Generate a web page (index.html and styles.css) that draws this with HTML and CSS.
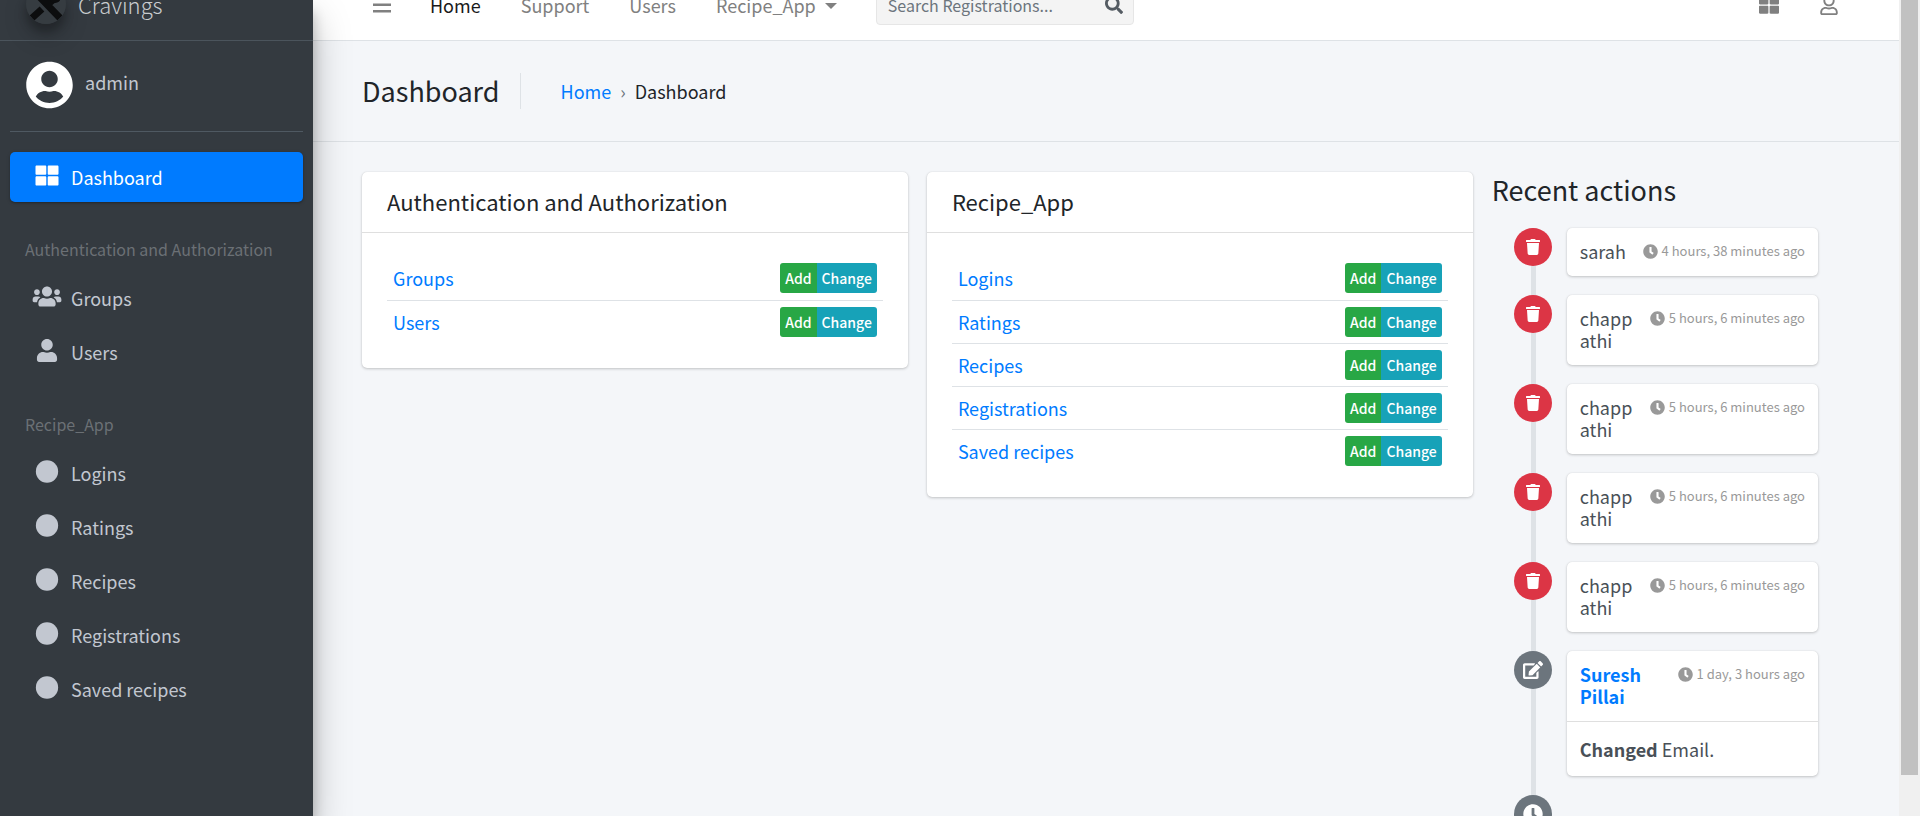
FILE: index.html
```html
<!DOCTYPE html>
<html lang="en">
<head>
<meta charset="utf-8">
<title>Dashboard | Cravings</title>
<link rel="stylesheet" href="styles.css">
</head>
<body>
<svg class="sprite" aria-hidden="true">
  <symbol id="i-grid" viewBox="0 0 512 512"><path d="M296 32h192c13.300 0 24 10.700 24 24v160c0 13.300-10.700 24-24 24H296c-13.300 0-24-10.700-24-24V56c0-13.300 10.700-24 24-24zm-80 0H24C10.700 32 0 42.700 0 56v160c0 13.300 10.700 24 24 24h192c13.300 0 24-10.700 24-24V56c0-13.300-10.700-24-24-24zM0 296v160c0 13.300 10.700 24 24 24h192c13.300 0 24-10.700 24-24V296c0-13.300-10.700-24-24-24H24c-13.300 0-24 10.700-24 24zm296 184h192c13.300 0 24-10.700 24-24V296c0-13.300-10.700-24-24-24H296c-13.300 0-24 10.700-24 24v160c0 13.300 10.700 24 24 24z"/></symbol>
  <symbol id="i-account" viewBox="0 0 496 512"><path d="M248 8C111 8 0 119 0 256s111 248 248 248 248-111 248-248S385 8 248 8zm0 96c48.600 0 88 39.400 88 88s-39.400 88-88 88-88-39.400-88-88 39.400-88 88-88zm0 344c-58.700 0-111.300-26.600-146.500-68.200 18.800-35.400 55.600-59.800 98.500-59.800 2.400 0 4.800.4 7.100 1.100 13 4.200 26.600 6.900 40.900 6.900 14.300 0 28-2.700 40.900-6.900 2.300-.7 4.700-1.100 7.100-1.100 42.900 0 79.700 24.400 98.500 59.800C359.300 421.400 306.700 448 248 448z"/></symbol>
  <symbol id="i-users" viewBox="0 0 640 512"><path d="M96 224c35.300 0 64-28.700 64-64s-28.700-64-64-64-64 28.700-64 64 28.700 64 64 64zm448 0c35.300 0 64-28.700 64-64s-28.700-64-64-64-64 28.700-64 64 28.700 64 64 64zm32 32h-64c-17.600 0-33.500 7.100-45.100 18.600 40.300 22.100 68.900 62 75.100 109.400h66c17.700 0 32-14.300 32-32v-32c0-35.300-28.700-64-64-64zm-256 0c61.900 0 112-50.100 112-112S381.900 32 320 32 208 82.100 208 144s50.100 112 112 112zm76.800 32h-8.300c-20.800 10-43.900 16-68.500 16s-47.600-6-68.500-16h-8.300C179.600 288 128 339.600 128 403.200V432c0 26.500 21.500 48 48 48h288c26.500 0 48-21.500 48-48v-28.800c0-63.600-51.600-115.200-115.200-115.200zm-223.700-13.400C161.500 263.100 145.600 256 128 256H64c-35.300 0-64 28.700-64 64v32c0 17.700 14.300 32 32 32h65.900c6.300-47.400 34.900-87.300 75.200-109.400z"/></symbol>
  <symbol id="i-user" viewBox="0 0 448 512"><path d="M224 256c70.700 0 128-57.300 128-128S294.700 0 224 0 96 57.300 96 128s57.300 128 128 128zm89.600 32h-16.700c-22.200 10.200-46.900 16-72.900 16s-50.600-5.800-72.900-16h-16.700C60.200 288 0 348.200 0 422.400V464c0 26.500 21.500 48 48 48h352c26.500 0 48-21.500 48-48v-41.600c0-74.200-60.200-134.400-134.400-134.400z"/></symbol>
  <symbol id="i-user-line" viewBox="0 0 448 512"><path d="M313.600 304c-28.700 0-42.500 16-89.600 16-47.100 0-60.800-16-89.600-16C60.200 304 0 364.200 0 438.400V464c0 26.500 21.500 48 48 48h352c26.500 0 48-21.500 48-48v-25.600c0-74.200-60.200-134.400-134.400-134.400zM400 464H48v-25.600c0-47.600 38.800-86.400 86.400-86.400 14.600 0 38.300 16 89.600 16 51.700 0 74.900-16 89.600-16 47.600 0 86.400 38.800 86.400 86.400V464zM224 288c79.500 0 144-64.500 144-144S303.500 0 224 0 80 64.500 80 144s64.500 144 144 144zm0-240c52.900 0 96 43.100 96 96s-43.100 96-96 96-96-43.100-96-96 43.100-96 96-96z"/></symbol>
  <symbol id="i-dot" viewBox="0 0 512 512"><circle cx="256" cy="256" r="248"/></symbol>
  <symbol id="i-clock" viewBox="0 0 512 512"><path d="M256 8C119 8 8 119 8 256s111 248 248 248 248-111 248-248S393 8 256 8zm57.100 350.100L224.900 294c-3.100-2.300-4.900-5.900-4.900-9.700V116c0-6.600 5.400-12 12-12h48c6.600 0 12 5.400 12 12v137.700l63.500 46.200c5.400 3.900 6.500 11.400 2.600 16.800l-28.200 38.800c-3.900 5.300-11.400 6.500-16.800 2.600z"/></symbol>
  <symbol id="i-trash" viewBox="0 0 448 512"><path d="M432 32H312l-9.400-18.700A24 24 0 0 0 281.100 0H166.800a23.700 23.700 0 0 0-21.400 13.300L136 32H16A16 16 0 0 0 0 48v32a16 16 0 0 0 16 16h416a16 16 0 0 0 16-16V48a16 16 0 0 0-16-16zM53.200 467a48 48 0 0 0 47.900 45h245.800a48 48 0 0 0 47.900-45L416 128H32z"/></symbol>
  <symbol id="i-edit" viewBox="0 0 576 512"><path d="M402.600 83.200l90.200 90.200c3.800 3.800 3.800 10 0 13.800L274.400 405.600l-92.800 10.300c-12.400 1.400-22.900-9.100-21.500-21.500l10.300-92.800L388.800 83.200c3.800-3.800 10-3.800 13.800 0zm162-22.900l-48.800-48.800c-15.200-15.200-39.900-15.200-55.200 0l-35.400 35.400c-3.800 3.800-3.800 10 0 13.800l90.200 90.200c3.800 3.800 10 3.800 13.800 0l35.400-35.400c15.200-15.300 15.200-40 0-55.200zM384 346.200V448H64V128h229.800c3.200 0 6.200-1.300 8.500-3.500l40-40c7.600-7.600 2.200-20.500-8.500-20.500H48C21.500 64 0 85.500 0 112v352c0 26.500 21.500 48 48 48h352c26.500 0 48-21.500 48-48V306.200c0-10.700-12.900-16-20.500-8.500l-40 40c-2.200 2.300-3.500 5.300-3.500 8.500z"/></symbol>
  <symbol id="i-search" viewBox="0 0 512 512"><path d="M505 442.700L405.300 343c-4.500-4.500-10.600-7-17-7H372c27.600-35.300 44-79.700 44-128C416 93.100 322.900 0 208 0S0 93.100 0 208s93.100 208 208 208c48.300 0 92.700-16.400 128-44v16.300c0 6.400 2.500 12.500 7 17l99.700 99.700c9.400 9.400 24.600 9.400 33.900 0l28.300-28.300c9.400-9.400 9.400-24.600.1-34zM208 336c-70.700 0-128-57.200-128-128 0-70.700 57.200-128 128-128 70.700 0 128 57.200 128 128 0 70.700-57.200 128-128 128z"/></symbol>
</svg>
<div class="app">
  <aside class="sidebar">
    <a class="brand" href="#">
      <svg class="brand-logo" viewBox="0 0 40 40" aria-hidden="true"><circle cx="20" cy="20" r="20" fill="#363c41"/><path d="M4 3l30 31M6 34l10-9M22 20l6-5" stroke="#0c0d0e" stroke-width="7" fill="none"/><circle cx="29" cy="13" r="6" fill="#0c0d0e"/></svg>
      <span>Cravings</span>
    </a>
    <div class="side-body">
      <div class="user-panel">
        <svg class="avatar" aria-hidden="true"><use href="#i-account"/></svg>
        <a href="#">admin</a>
      </div>
      <nav class="side-nav" aria-label="Models">
        <a class="side-link active" href="#"><svg class="ico"><use href="#i-grid"/></svg>Dashboard</a>
        <h2 class="side-head">Authentication and Authorization</h2>
        <a class="side-link" href="#"><svg class="ico"><use href="#i-users"/></svg>Groups</a>
        <a class="side-link" href="#"><svg class="ico"><use href="#i-user"/></svg>Users</a>
        <h2 class="side-head">Recipe_App</h2>
        <a class="side-link" href="#"><svg class="ico"><use href="#i-dot"/></svg>Logins</a>
        <a class="side-link" href="#"><svg class="ico"><use href="#i-dot"/></svg>Ratings</a>
        <a class="side-link" href="#"><svg class="ico"><use href="#i-dot"/></svg>Recipes</a>
        <a class="side-link" href="#"><svg class="ico"><use href="#i-dot"/></svg>Registrations</a>
        <a class="side-link" href="#"><svg class="ico"><use href="#i-dot"/></svg>Saved recipes</a>
      </nav>
    </div>
  </aside>

  <div class="main">
    <header class="topbar">
      <button class="menu-btn" type="button" aria-label="Toggle menu"><svg viewBox="0 0 18 18"><path d="M0 1h18v2.400H0zM0 7.500h18v2.400H0zM0 14h18v2.400H0z"/></svg></button>
      <nav class="top-nav" aria-label="Main">
        <a class="current" href="#">Home</a>
        <a href="#">Support</a>
        <a href="#">Users</a>
        <a class="drop" href="#">Recipe_App</a>
      </nav>
      <form class="search">
        <input type="search" placeholder="Search Registrations..." aria-label="Search Registrations">
        <button type="button" aria-label="Search"><svg><use href="#i-search"/></svg></button>
      </form>
      <div class="top-tools">
        <button type="button" aria-label="Apps"><svg><use href="#i-grid"/></svg></button>
        <button type="button" aria-label="Account"><svg><use href="#i-user-line"/></svg></button>
      </div>
    </header>

    <div class="page-head">
      <h1>Dashboard</h1>
      <nav class="crumbs" aria-label="Breadcrumb"><a href="#">Home</a><span class="sep">›</span><span>Dashboard</span></nav>
    </div>

    <main class="content">
      <div class="cards">
        <section class="card">
          <h2 class="card-head">Authentication and Authorization</h2>
          <table class="models">
            <tr><td><a href="#">Groups</a></td><td class="acts"><a class="add" href="#">Add</a><a class="change" href="#">Change</a></td></tr>
            <tr><td><a href="#">Users</a></td><td class="acts"><a class="add" href="#">Add</a><a class="change" href="#">Change</a></td></tr>
          </table>
        </section>
        <section class="card">
          <h2 class="card-head">Recipe_App</h2>
          <table class="models">
            <tr><td><a href="#">Logins</a></td><td class="acts"><a class="add" href="#">Add</a><a class="change" href="#">Change</a></td></tr>
            <tr><td><a href="#">Ratings</a></td><td class="acts"><a class="add" href="#">Add</a><a class="change" href="#">Change</a></td></tr>
            <tr><td><a href="#">Recipes</a></td><td class="acts"><a class="add" href="#">Add</a><a class="change" href="#">Change</a></td></tr>
            <tr><td><a href="#">Registrations</a></td><td class="acts"><a class="add" href="#">Add</a><a class="change" href="#">Change</a></td></tr>
            <tr><td><a href="#">Saved recipes</a></td><td class="acts"><a class="add" href="#">Add</a><a class="change" href="#">Change</a></td></tr>
          </table>
        </section>
      </div>
      <section class="recent">
        <h2>Recent actions</h2>
        <ol class="timeline">
          <li><span class="mark red"><svg><use href="#i-trash"/></svg></span><article class="entry"><div class="entry-head"><span class="who">sarah</span><time><svg><use href="#i-clock"/></svg>4 hours, 38 minutes ago</time></div></article></li>
          <li><span class="mark red"><svg><use href="#i-trash"/></svg></span><article class="entry"><div class="entry-head"><span class="who">chappathi</span><time><svg><use href="#i-clock"/></svg>5 hours, 6 minutes ago</time></div></article></li>
          <li><span class="mark red"><svg><use href="#i-trash"/></svg></span><article class="entry"><div class="entry-head"><span class="who">chappathi</span><time><svg><use href="#i-clock"/></svg>5 hours, 6 minutes ago</time></div></article></li>
          <li><span class="mark red"><svg><use href="#i-trash"/></svg></span><article class="entry"><div class="entry-head"><span class="who">chappathi</span><time><svg><use href="#i-clock"/></svg>5 hours, 6 minutes ago</time></div></article></li>
          <li><span class="mark red"><svg><use href="#i-trash"/></svg></span><article class="entry"><div class="entry-head"><span class="who">chappathi</span><time><svg><use href="#i-clock"/></svg>5 hours, 6 minutes ago</time></div></article></li>
          <li><span class="mark"><svg class="wide"><use href="#i-edit"/></svg></span><article class="entry"><div class="entry-head"><a class="who" href="#">Suresh Pillai</a><time><svg><use href="#i-clock"/></svg>1 day, 3 hours ago</time></div><p class="entry-body"><strong>Changed</strong> Email.</p></article></li>
          <li><span class="mark"><svg class="wide"><use href="#i-clock"/></svg></span></li>
        </ol>
      </section>
    </main>
  </div>
  <div class="scroll" aria-hidden="true"><div class="thumb"></div></div>
</div>
</body>
</html>
```
FILE: styles.css
```css
* { box-sizing: border-box; }
body {
  margin: 0;
  background: #f4f6f9;
  color: #212529;
  font: 400 18px/26px "Noto Sans CJK SC", "Noto Sans", sans-serif;
}
h1, h2, p, ol { margin: 0; padding: 0; font-weight: 400; }
a { color: #007bff; text-decoration: none; }
svg { display: block; fill: currentColor; }
button { padding: 0; border: 0; background: none; color: inherit; font: inherit; }
.sprite { display: none; }

.app {
  display: grid;
  grid-template-columns: 313px minmax(0, 1fr) 21px;
  grid-template-rows: minmax(0, 1fr);
  height: 100vh;
  overflow: hidden;
}

/* Sidebar */
.sidebar {
  position: relative;
  z-index: 2;
  background: #343a40;
  box-shadow: 0 18px 35px rgba(0, 0, 0, .25), 0 12px 12px rgba(0, 0, 0, .22);
}
.brand {
  display: flex;
  align-items: center;
  gap: 12px;
  height: 71px;
  margin-top: -30px;
  padding: 0 0 3px 26px;
  border-bottom: 1px solid #4b545c;
  color: #c9cccf;
  font-size: 22px;
  font-weight: 300;
}
.brand-logo {
  width: 40px;
  height: 40px;
  border-radius: 50%;
  box-shadow: 0 12px 24px rgba(0, 0, 0, .19), 0 8px 8px rgba(0, 0, 0, .23);
}
.side-body { padding: 0 10px; }
.user-panel {
  display: flex;
  gap: 12px;
  height: 91px;
  padding: 20px 16px;
  margin-bottom: 20px;
  border-bottom: 1px solid #4f5962;
}
.user-panel a { color: #c2c7d0; padding-top: 8px; }
.avatar { width: 47px; height: 48px; color: #fff; }
.side-link {
  display: flex;
  align-items: center;
  gap: 7px;
  height: 50px;
  margin-bottom: 4px;
  padding-left: 20px;
  border-radius: 5px;
  color: #c2c7d0;
}
.side-link.active {
  background: #007bff;
  color: #fff;
  box-shadow: 0 1px 4px rgba(0, 0, 0, .12), 0 1px 2px rgba(0, 0, 0, .24);
}
.ico { width: 34px; height: 23px; margin-bottom: 3px; }
.side-head {
  height: 63px;
  margin-bottom: 4px;
  padding: 30px 15px 7px;
  color: #6b7075;
  font-size: 16px;
}

/* Top bar */
.main { min-width: 0; }
.topbar {
  display: flex;
  align-items: center;
  height: 71px;
  margin-top: -30px;
  padding: 0 60px;
  background: #fff;
  border-bottom: 1px solid #dee2e6;
  color: #808080;
}
.menu-btn svg { width: 18px; height: 18px; }
.top-nav { display: flex; gap: 40px; margin-left: 39px; }
.top-nav a { color: #808080; }
.top-nav a.current { color: #1a1a1a; }
.drop::after {
  content: "";
  display: inline-block;
  margin-left: 9px;
  vertical-align: 4px;
  border: 6px solid transparent;
  border-top-color: currentColor;
  border-bottom: 0;
}
.search {
  display: flex;
  width: 258px;
  height: 39px;
  margin-left: 39px;
  border: 1px solid #e6e6e6;
  border-radius: 4px;
  background: #f4f4f4;
  color: #555c63;
}
.search input {
  flex: 1;
  min-width: 0;
  padding: 0 0 0 11px;
  border: 0;
  background: none;
  color: inherit;
  font: inherit;
  font-size: 16px;
}
.search input::placeholder { color: #6c757d; opacity: 1; }
.search button { padding: 0 10px; }
.search svg { width: 18px; height: 18px; }
.top-tools { display: flex; gap: 40px; margin-left: auto; }
.top-tools svg { width: 20px; height: 20px; }

/* Page heading */
.page-head {
  display: flex;
  align-items: center;
  height: 101px;
  padding-left: 49px;
  border-bottom: 1px solid #dee2e6;
}
.page-head h1 {
  padding-right: 20px;
  border-right: 1px solid #dee2e6;
  font-size: 27px;
  line-height: 36px;
}
.crumbs { display: flex; padding-left: 40px; }
.sep { padding: 0 9px; color: #6c757d; }

/* Content */
.content {
  display: grid;
  grid-template-columns: minmax(0, 3fr) minmax(0, 1fr);
  gap: 19px;
  padding: 30px 37px 0 49px;
}
.cards {
  display: grid;
  grid-template-columns: 1fr 1fr;
  gap: 19px;
  align-items: start;
}
.card, .entry {
  border-radius: 5px;
  background: #fff;
  box-shadow: 0 0 1px rgba(0, 0, 0, .13), 0 1px 3px rgba(0, 0, 0, .2);
}
.card { padding-bottom: 25px; }
.card-head {
  padding: 13px 25px 15px;
  border-bottom: 1px solid #dfdfdf;
  font-size: 22px;
  line-height: 32px;
}
.models {
  width: calc(100% - 50px);
  margin: 24px 25px 0;
  border-collapse: collapse;
}
.models td { height: 43px; padding: 0 6px; }
.models tr + tr td { border-top: 1px solid #dee2e6; }
.acts { text-align: right; white-space: nowrap; font-size: 0; }
.acts a {
  display: inline-block;
  padding: 0 5px;
  color: #fff;
  font-size: 14px;
  font-weight: 500;
  line-height: 30px;
  vertical-align: middle;
}
.add { background: #28a745; border-radius: 3px 0 0 3px; }
.change { background: #17a2b8; border-radius: 0 3px 3px 0; }

.recent h2 { font-size: 27px; line-height: 36px; margin-bottom: 20px; }
.timeline {
  display: flex;
  flex-direction: column;
  gap: 19px;
  padding: 0 44px 0 22px;
  list-style: none;
  background: linear-gradient(#dee2e6, #dee2e6) 39px 0 / 5px 100% no-repeat;
}
.timeline li { display: flex; align-items: flex-start; gap: 15px; }
.mark {
  display: grid;
  place-items: center;
  flex: none;
  width: 38px;
  height: 38px;
  border-radius: 50%;
  background: #6c757d;
  color: #fff;
}
.mark.red { background: #dc3545; }
.mark svg { width: 16px; height: 16px; }
.mark svg.wide { width: 20px; height: 20px; }
.entry { flex: 1; min-width: 0; }
.entry-head {
  display: flex;
  align-items: flex-start;
  gap: 12px;
  padding: 12px 13px 14px;
  line-height: 22px;
}
.who { flex: 1; min-width: 0; color: #495057; overflow-wrap: anywhere; }
a.who { color: #007bff; font-weight: 700; }
time {
  display: flex;
  align-items: center;
  gap: 4px;
  color: #999;
  font-size: 13px;
  white-space: nowrap;
}
time svg { width: 15px; height: 15px; }
.entry-body {
  padding: 14px 13px;
  border-top: 1px solid #dfdfdf;
  color: #495057;
}

/* Scrollbar */
.scroll { padding: 0 2px; background: #f0f0f0; }
.thumb { height: 95%; background: #c1c1c1; }
```
